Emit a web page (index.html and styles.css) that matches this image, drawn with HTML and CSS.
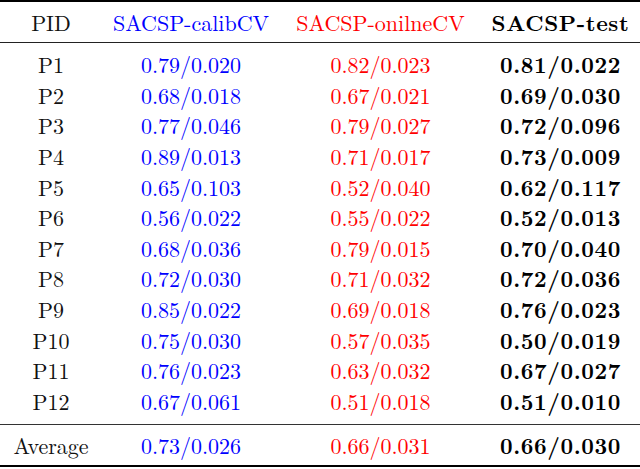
FILE: index.html
```html
<!DOCTYPE html>
<html>
<head>
<meta charset="utf-8">
<link rel="stylesheet" href="styles.css">
</head>
<body>
<div class="tbl">
  <div class="row head">
    <div class="c">PID</div>
    <div class="c blue">SACSP-calibCV</div>
    <div class="c red">SACSP-onilneCV</div>
    <div class="c bold">SACSP-test</div>
  </div>
  <div class="body">
    <div class="row"><div class="c">P1</div><div class="c blue">0.79/0.020</div><div class="c red">0.82/0.023</div><div class="c bold">0.81/0.022</div></div>
    <div class="row"><div class="c">P2</div><div class="c blue">0.68/0.018</div><div class="c red">0.67/0.021</div><div class="c bold">0.69/0.030</div></div>
    <div class="row"><div class="c">P3</div><div class="c blue">0.77/0.046</div><div class="c red">0.79/0.027</div><div class="c bold">0.72/0.096</div></div>
    <div class="row"><div class="c">P4</div><div class="c blue">0.89/0.013</div><div class="c red">0.71/0.017</div><div class="c bold">0.73/0.009</div></div>
    <div class="row"><div class="c">P5</div><div class="c blue">0.65/0.103</div><div class="c red">0.52/0.040</div><div class="c bold">0.62/0.117</div></div>
    <div class="row"><div class="c">P6</div><div class="c blue">0.56/0.022</div><div class="c red">0.55/0.022</div><div class="c bold">0.52/0.013</div></div>
    <div class="row"><div class="c">P7</div><div class="c blue">0.68/0.036</div><div class="c red">0.79/0.015</div><div class="c bold">0.70/0.040</div></div>
    <div class="row"><div class="c">P8</div><div class="c blue">0.72/0.030</div><div class="c red">0.71/0.032</div><div class="c bold">0.72/0.036</div></div>
    <div class="row"><div class="c">P9</div><div class="c blue">0.85/0.022</div><div class="c red">0.69/0.018</div><div class="c bold">0.76/0.023</div></div>
    <div class="row"><div class="c">P10</div><div class="c blue">0.75/0.030</div><div class="c red">0.57/0.035</div><div class="c bold">0.50/0.019</div></div>
    <div class="row"><div class="c">P11</div><div class="c blue">0.76/0.023</div><div class="c red">0.63/0.032</div><div class="c bold">0.67/0.027</div></div>
    <div class="row"><div class="c">P12</div><div class="c blue">0.67/0.061</div><div class="c red">0.51/0.018</div><div class="c bold">0.51/0.010</div></div>
  </div>
  <div class="row foot">
    <div class="c">Average</div>
    <div class="c blue">0.73/0.026</div>
    <div class="c red">0.66/0.031</div>
    <div class="c bold">0.66/0.030</div>
  </div>
</div>
</body>
</html>
```

FILE: styles.css
```css
html, body {
  margin: 0;
  padding: 0;
  background: #fff;
}
.tbl {
  width: 640px;
  font-family: "Latin Modern Roman", "Liberation Serif", serif;
  font-size: 22px;
  color: #111;
  border-top: 2px solid #000;
}
.row {
  display: grid;
  grid-template-columns: 102px 178px 201px 159px;
  height: 30.6px;
  align-items: center;
}
.c {
  text-align: center;
  white-space: nowrap;
  line-height: 1;
}
.head {
  height: 40px;
  border-bottom: 1.2px solid #222;
}
.body {
  padding-top: 6px;
  padding-bottom: 7.5px;
  border-bottom: 1.2px solid #333;
}
.foot {
  height: 40px;
  border-bottom: 2px solid #000;
}
.blue { color: #0000ff; }
.red { color: #ff0000; }
.bold {
  font-weight: bold;
  color: #000;
  letter-spacing: 0.6px;
}
```
